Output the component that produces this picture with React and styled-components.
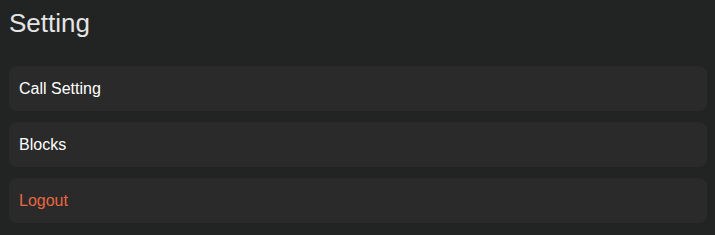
import styled, { createGlobalStyle } from 'styled-components';

const GlobalStyle = createGlobalStyle`
  html, body {
    margin: 0;
    padding: 0;
    background: #222424;
  }
  body {
    font-family: 'Liberation Sans', Arial, sans-serif;
  }
`;

const Page = styled.div`
  padding: 8px 8px 13px 9px;
  display: flex;
  flex-direction: column;
`;

const Title = styled.h1`
  margin: 0 0 28px 0;
  font-size: 26px;
  font-weight: 400;
  line-height: 30px;
  color: #e4e4e4;
`;

const List = styled.div`
  display: flex;
  flex-direction: column;
  gap: 11px;
`;

const Item = styled.div`
  height: 45px;
  display: flex;
  align-items: center;
  padding: 0 10px;
  background: #2a2a2a;
  border-radius: 8px;
  font-size: 16px;
  color: ${p => (p.$danger ? '#ea6642' : '#ffffff')};
  cursor: pointer;
`;

const items = [
  { label: 'Call Setting' },
  { label: 'Blocks' },
  { label: 'Logout', danger: true },
];

const App = () => {
  return (
    <>
      <GlobalStyle />
      <Page>
        <Title>Setting</Title>
        <List>
          {items.map(it => (
            <Item key={it.label} $danger={it.danger}>
              {it.label}
            </Item>
          ))}
        </List>
      </Page>
    </>
  );
};

export default App;
